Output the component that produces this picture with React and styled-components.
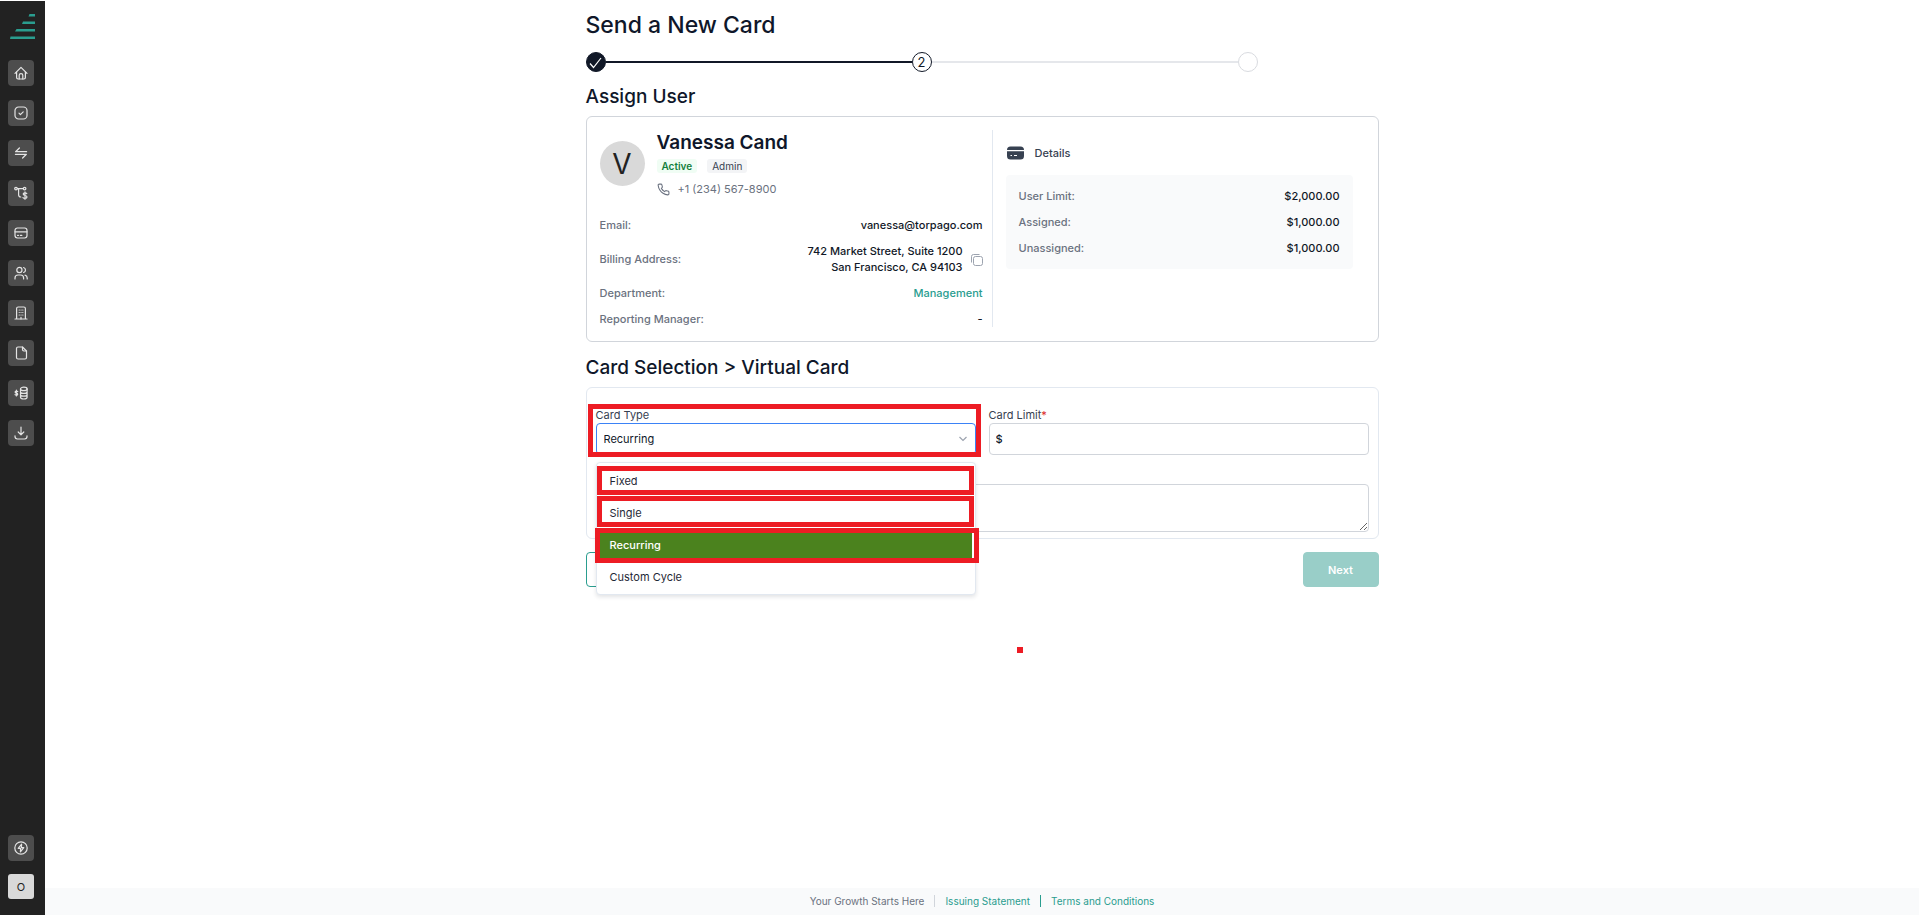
import React from 'react'
import styled, { createGlobalStyle, css } from 'styled-components'

const GlobalStyle = createGlobalStyle`
  *, *::before, *::after {
    box-sizing: border-box;
  }

  body {
    margin: 0;
    background: #fff;
    color: #0f172a;
    font-family: Inter, "Liberation Sans", sans-serif;
    font-size: 11px;
    line-height: 16px;
  }

  h1, h2, h3, p, ul, ol, dl, dd {
    margin: 0;
    padding: 0;
  }

  ul, ol {
    list-style: none;
  }

  a {
    color: #2a9d8f;
    text-decoration: none;
  }

  button, input, select, textarea {
    font: inherit;
    color: inherit;
  }
`

const Shell = styled.div`
  display: flex;
  min-height: 100vh;
`

const Sidebar = styled.nav`
  display: flex;
  flex-direction: column;
  align-items: center;
  flex: 0 0 45px;
  padding: 13px 3px 16px 0;
  border-top: 1px solid #fff;
  background: #222;
`

const Logo = styled.svg`
  display: block;
  width: 26px;
  height: 26px;
  margin: 0 0 20px 4px;
`

const NavList = styled.ul`
  display: flex;
  flex-direction: column;
  gap: 14px;
  flex: 1;
`

const NavLink = styled.a`
  display: flex;
  align-items: center;
  justify-content: center;
  width: 26px;
  height: 26px;
  border-radius: 4px;
  background: #4d4d4d;
  color: #e4e4e4;
`

const NavIcon = styled.svg`
  width: 14px;
  height: 14px;
  fill: none;
  stroke: currentColor;
  stroke-width: 1.2;
  stroke-linecap: round;
  stroke-linejoin: round;
`

const Account = styled.button`
  width: 26px;
  height: 25px;
  margin-top: 13px;
  padding: 0;
  border: 0;
  border-radius: 3px;
  background: #d9d9d9;
  color: #222;
`

const Page = styled.div`
  display: flex;
  flex-direction: column;
  flex: 1;
  min-width: 0;
`

const Content = styled.main`
  flex: 1;
  width: 100%;
  max-width: 793px;
  margin: 0 auto;
  padding-top: 9px;
`

const Title = styled.h1`
  font-size: 23px;
  font-weight: 500;
  line-height: 32px;
`

const Heading = styled.h2`
  font-size: 19px;
  font-weight: 500;
  line-height: 24px;
`

const Steps = styled.ol`
  display: flex;
  max-width: 672px;
  margin: 11px 0 13px;
`

const Step = styled.li`
  display: flex;
  align-items: center;
  flex: ${({ $last }) => ($last ? '0 0 auto' : '1')};

  &::after {
    content: ${({ $last }) => ($last ? 'none' : '""')};
    flex: 1;
    height: 2px;
    background: ${({ $done }) => ($done ? '#111827' : '#e5e7eb')};
  }
`

const stepColors = {
  done: css`
    background: #111827;
    border-color: #111827;
    color: #fff;
  `,
  current: css`
    border-color: #111827;
    color: #111827;
  `,
  next: css`
    border-color: #d9dbe0;
  `,
}

const StepDot = styled.span`
  display: flex;
  align-items: center;
  justify-content: center;
  width: 20px;
  height: 20px;
  border: 1px solid;
  border-radius: 50%;
  font-size: 13px;
  ${({ $state }) => stepColors[$state]}
`

const UserCard = styled.section`
  display: grid;
  grid-template-columns: 393px 1fr;
  gap: 13px;
  margin: 7px 0 14px;
  padding: 13px 25px 14px 13px;
  border: 1px solid #d1d5db;
  border-radius: 6px;
`

const Profile = styled.div`
  padding-right: 9px;
  border-right: 1px solid #e2e8f0;
`

const Person = styled.div`
  display: flex;
  align-items: center;
  gap: 12px;
  margin-bottom: 20px;
`

const Avatar = styled.span`
  display: flex;
  align-items: center;
  justify-content: center;
  width: 45px;
  height: 45px;
  border-radius: 50%;
  background: #d9d9d9;
  color: #222;
  font-size: 28px;
`

const Name = styled.h3`
  font-size: 19px;
  font-weight: 600;
  line-height: 26px;
`

const Tags = styled.div`
  display: flex;
  gap: 10px;
  margin: 3px 0 8px;
`

const Tag = styled.span`
  padding: 0 5px;
  border-radius: 3px;
  background: ${({ $active }) => ($active ? '#f0fdf4' : '#f3f4f6')};
  color: ${({ $active }) => ($active ? '#15803d' : '#374151')};
  font-size: 10px;
  font-weight: ${({ $active }) => ($active ? 600 : 400)};
  line-height: 14px;
`

const Phone = styled.p`
  display: flex;
  align-items: center;
  gap: 8px;
  color: #6b7280;
`

const SmallIcon = styled.svg`
  display: block;
  width: 13px;
  height: 13px;
  fill: none;
  stroke: currentColor;
`

const Facts = styled.dl`
  display: flex;
  flex-direction: column;
  gap: 10px;
`

const Fact = styled.div`
  display: flex;
  align-items: center;
  justify-content: space-between;
  font-weight: 500;

  dt {
    color: #6b7280;
  }

  dd {
    display: flex;
    align-items: center;
    gap: 7px;
    color: #111827;
    text-align: right;
  }
`

const CopyButton = styled.button`
  padding: 0;
  border: 0;
  background: none;
  color: #9ca3af;
`

const Details = styled.div`
  padding-top: 15px;
`

const DetailsTitle = styled.h3`
  display: flex;
  align-items: center;
  gap: 11px;
  margin: 0 0 14px 1px;
  color: #374151;
  font-size: 11px;
  font-weight: 500;
  line-height: 16px;
`

const CardGlyph = styled.svg`
  display: block;
  width: 17px;
  height: 14px;
`

const Limits = styled.div`
  padding: 13px;
  border-radius: 4px;
  background: #f9fafb;
`

const CardForm = styled.form`
  margin-top: 7px;
`

const Fields = styled.div`
  display: grid;
  grid-template-columns: 1fr 1fr;
  gap: 0 13px;
  padding: 19px 9px 6px;
  border: 1px solid #e2e8f0;
  border-radius: 6px;
`

const Field = styled.div`
  position: relative;
  display: flex;
  flex-direction: column;
`

const Label = styled.label`
  color: #374151;

  span {
    color: #dc2626;
  }
`

const controlStyle = css`
  width: 100%;
  border: 1px solid #d1d5db;
  border-radius: 4px;
  background: #fff;
  outline: none;
`

const SelectBox = styled.div`
  display: grid;
  align-items: center;

  > * {
    grid-area: 1 / 1;
  }
`

const Select = styled.select`
  ${controlStyle}
  height: 32px;
  padding: 0 7px;
  border-color: #3b82f6;
  appearance: none;
`

const Chevron = styled(SmallIcon)`
  justify-self: end;
  width: 8px;
  height: 6px;
  margin-right: 9px;
  color: #9ca3af;
  pointer-events: none;
`

const Input = styled.input`
  ${controlStyle}
  height: 32px;
  padding: 0 6px;
  font-weight: 500;
`

const Notes = styled.textarea`
  ${controlStyle}
  grid-column: 1 / -1;
  display: block;
  height: 48px;
  margin-top: 29px;
  resize: vertical;
`

const Menu = styled.ul`
  position: absolute;
  z-index: 2;
  top: 100%;
  left: 0;
  right: 0;
  margin-top: 7px;
  padding: 2px 3px 1px;
  border: 1px solid #e2e8f0;
  border-radius: 4px;
  background: #fff;
  box-shadow: 0 2px 4px rgba(15, 23, 42, 0.12);
`

const Option = styled.li`
  position: relative;
  padding: 8px 10px;
  border-radius: 2px;
  background: ${({ $selected }) => ($selected ? '#4b821e' : 'transparent')};
  color: ${({ $selected }) => ($selected ? '#fff' : '#1f2937')};
  font-weight: ${({ $selected }) => ($selected ? 500 : 400)};
`

/* Red outline laid over a control to point it out */
const Highlight = styled.span`
  position: absolute;
  z-index: 1;
  inset: ${({ $inset }) => $inset};
  border: 5px solid #ed1c24;
  pointer-events: none;
`

const Marker = styled.span`
  position: absolute;
  top: 95px;
  left: 431px;
  width: 6px;
  height: 6px;
  background: #ed1c24;
`

const Actions = styled.div`
  position: relative;
  display: flex;
  justify-content: space-between;
  margin-top: 13px;
`

const Button = styled.button`
  width: 76px;
  height: 35px;
  border: 1px solid ${({ $primary }) => ($primary ? '#99cec8' : '#2a9d8f')};
  border-radius: 4px;
  background: ${({ $primary }) => ($primary ? '#99cec8' : '#fff')};
  color: ${({ $primary }) => ($primary ? '#fff' : '#2a9d8f')};
  font-weight: 600;
`

const Footer = styled.footer`
  display: flex;
  align-items: center;
  justify-content: center;
  gap: 10px;
  padding: 5px 0 6px;
  background: #f9fafb;
  color: #6b7280;
  font-size: 10px;
`

const Rule = styled.span`
  width: 1px;
  height: 12px;
  background: ${({ $color }) => $color};
`

const navItems = [
  {
    label: 'Home',
    icon: (
      <>
        <path d="M1 7.4 7 1.4l6 6" />
        <path d="M2.6 6.2v5.4q0 1.4 1.4 1.4h6q1.4 0 1.4-1.4V6.2" />
        <path d="M5.2 13V9.2q0-1.6 1.8-1.6t1.8 1.6V13" />
      </>
    ),
  },
  {
    label: 'Approvals',
    icon: (
      <>
        <rect x="1" y="1" width="12" height="12" rx="3.6" />
        <path d="m5 7.2 1.4 1.4L9.2 5.8" />
      </>
    ),
  },
  {
    label: 'Transactions',
    icon: <path d="M12.6 5.7H1.6L5.4 2M1.4 8.3h11L8.6 12" />,
  },
  {
    label: 'Reimbursements',
    icon: (
      <>
        <circle cx="2" cy="2.6" r="1.3" />
        <circle cx="10.6" cy="2.6" r="1.3" />
        <path d="M3.3 2.6h6M4.6 2.8v6q0 2.2 2.2 2.2" />
        <path d="M12.8 7.6q-.6-.8-1.8-.8-1.8 0-1.8 1.3 0 1.1 1.8 1.4 2 .3 2 1.6 0 1.3-2 1.3-1.4 0-2-.8M11 5.9v7.4" />
      </>
    ),
  },
  {
    label: 'Cards',
    icon: (
      <>
        <rect x="1" y="2" width="12" height="10" rx="2.4" />
        <path d="M1 5.8h12M3.6 9.4h.8M6.4 9.4h1.4" />
      </>
    ),
  },
  {
    label: 'Users',
    icon: (
      <>
        <circle cx="5.4" cy="4" r="2.6" />
        <path d="M1 13v-1q0-3 3-3h2.6q3 0 3 3v1M9.6 1.5q1.900.6 1.900 2.500T9.6 6.5M11 9.2q2.200.6 2.200 2.800v1" />
      </>
    ),
  },
  {
    label: 'Company',
    icon: (
      <>
        <path d="M1 13h12M2.6 13V2.6Q2.6 1 4.2 1h5.6q1.6 0 1.6 1.6V13" />
        <path d="M5.2 4h.1M7 4h.1M8.8 4h.1M5.2 6.5h.1M7 6.5h.1M8.8 6.5h.1M5.2 9h.1M7 9h.1M8.8 9h.1M7 11.3V13" />
      </>
    ),
  },
  {
    label: 'Documents',
    icon: (
      <>
        <path d="M8.5 1H4Q2.5 1 2.5 2.5v9Q2.5 13 4 13h7q1.5 0 1.5-1.5V5z" />
        <path d="M8.5 1v2.6Q8.5 5 9.9 5h2.6" />
      </>
    ),
  },
  {
    label: 'Accounting',
    icon: (
      <>
        <ellipse cx="9.8" cy="2.9" rx="3.3" ry="1.7" />
        <path d="M6.5 2.9v8.4q0 1.7 3.3 1.7t3.3-1.7V2.9M6.5 5.7q0 1.7 3.3 1.7t3.3-1.7M6.5 8.5q0 1.7 3.3 1.7t3.3-1.7" />
        <path d="M3.7 5.5Q3.2 5 2.4 5 1.1 5 1.1 6t1.3 1.1Q3.7 7.3 3.7 8.2T2.4 9.2Q1.5 9.2 1 8.6M2.4 4.2v5.8" />
      </>
    ),
  },
  {
    label: 'Downloads',
    icon: <path d="M7 1v7.6M4.2 6 7 8.8 9.8 6M1 9.8v.8Q1 13 3.4 13h7.2q2.4 0 2.4-2.4v-.8" />,
  },
]

const options = [
  { label: 'Fixed', inset: '1px -2px 2px -3px' },
  { label: 'Single', inset: '-1px -2px 2px -3px' },
  { label: 'Recurring', inset: '-1px -7px -2px -5px', selected: true },
  { label: 'Custom Cycle' },
]

const limits = [
  ['User Limit:', '$2,000.00'],
  ['Assigned:', '$1,000.00'],
  ['Unassigned:', '$1,000.00'],
]

const SideNav = () => (
  <Sidebar aria-label="Main">
    <Logo viewBox="0 0 26 26" aria-hidden="true">
      <path
        fill="#2a9d8f"
        d="M19.5 0H25v2.400h-6.500zM13 7.500h12v2.400H12zM6.500 15H25v2.400H5zM.5 22.600H25V25H0z"
      />
    </Logo>
    <NavList>
      {navItems.map(({ label, icon }) => (
        <li key={label}>
          <NavLink href="#" aria-label={label}>
            <NavIcon viewBox="0 0 14 14">{icon}</NavIcon>
          </NavLink>
        </li>
      ))}
    </NavList>
    <NavLink href="#" aria-label="Quick actions">
      <NavIcon viewBox="0 0 14 14">
        <circle cx="7" cy="7" r="6.2" />
        <path d="M7.6 3.2 4.2 7.4h2.4l-.2 3.4 3.4-4.200H7.4z" />
      </NavIcon>
    </NavLink>
    <Account type="button">O</Account>
  </Sidebar>
)

const UserSummary = () => (
  <UserCard>
    <Profile>
      <Person>
        <Avatar>V</Avatar>
        <div>
          <Name>Vanessa Cand</Name>
          <Tags>
            <Tag $active>Active</Tag>
            <Tag>Admin</Tag>
          </Tags>
          <Phone>
            <SmallIcon viewBox="0 0 24 24" strokeWidth="2" strokeLinejoin="round">
              <path d="M22 16.92v3a2 2 0 0 1-2.18 2 19.79 19.79 0 0 1-8.63-3.07 19.5 19.5 0 0 1-6-6 19.79 19.79 0 0 1-3.07-8.67A2 2 0 0 1 4.11 2h3a2 2 0 0 1 2 1.72 12.84 12.84 0 0 0 .7 2.81 2 2 0 0 1-.45 2.11L8.09 9.91a16 16 0 0 0 6 6l1.27-1.27a2 2 0 0 1 2.11-.45 12.84 12.84 0 0 0 2.81.7A2 2 0 0 1 22 16.92z" />
            </SmallIcon>
            +1 (234) 567-8900
          </Phone>
        </div>
      </Person>
      <Facts>
        <Fact>
          <dt>Email:</dt>
          <dd>vanessa@torpago.com</dd>
        </Fact>
        <Fact>
          <dt>Billing Address:</dt>
          <dd>
            <span>
              742 Market Street, Suite 1200
              <br />
              San Francisco, CA 94103
            </span>
            <CopyButton type="button" aria-label="Copy address">
              <SmallIcon viewBox="0 0 13 13">
                <rect x="3.5" y="3.5" width="9" height="9" rx="2" />
                <path d="M1.5 9.500V3.500q0-2 2-2h6" />
              </SmallIcon>
            </CopyButton>
          </dd>
        </Fact>
        <Fact>
          <dt>Department:</dt>
          <dd>
            <a href="#">Management</a>
          </dd>
        </Fact>
        <Fact>
          <dt>Reporting Manager:</dt>
          <dd>-</dd>
        </Fact>
      </Facts>
    </Profile>
    <Details>
      <DetailsTitle>
        <CardGlyph viewBox="0 0 17 14" aria-hidden="true">
          <path fill="#374151" d="M0 4q0-3.5 3.5-3.5h10Q17 .5 17 4zM0 5.200h17V10q0 3.5-3.5 3.5h-10Q0 13.5 0 10z" />
          <path stroke="#fff" d="M3.5 9.5h1.5M7 9.5h3" />
        </CardGlyph>
        Details
      </DetailsTitle>
      <Limits>
        <Facts>
          {limits.map(([label, value]) => (
            <Fact key={label}>
              <dt>{label}</dt>
              <dd>{value}</dd>
            </Fact>
          ))}
        </Facts>
      </Limits>
    </Details>
  </UserCard>
)

const CardSelection = () => (
  <CardForm>
    <Fields>
      <Field>
        <Label htmlFor="card-type">Card Type</Label>
        <SelectBox>
          <Select id="card-type" defaultValue="Recurring">
            {options.map(({ label }) => (
              <option key={label}>{label}</option>
            ))}
          </Select>
          <Chevron viewBox="0 0 8 6" strokeWidth="1.2">
            <path d="m.5 1 3.5 3.5L7.5 1" />
          </Chevron>
        </SelectBox>
        <Highlight $inset="-3px -5px -2px -8px" />
        <Menu role="listbox" aria-label="Card Type">
          {options.map(({ label, inset, selected }) => (
            <Option key={label} role="option" aria-selected={!!selected} $selected={selected}>
              {label}
              {inset && <Highlight $inset={inset} />}
            </Option>
          ))}
        </Menu>
      </Field>
      <Field>
        <Label htmlFor="card-limit">
          Card Limit<span>*</span>
        </Label>
        <Input id="card-limit" defaultValue="$" />
      </Field>
      <Notes aria-label="Notes" />
    </Fields>
    <Actions>
      <Button type="button" aria-label="Back" />
      <Button type="submit" $primary disabled>
        Next
      </Button>
      <Marker />
    </Actions>
  </CardForm>
)

const App = () => (
  <>
    <GlobalStyle />
    <Shell>
      <SideNav />
      <Page>
        <Content>
          <Title>Send a New Card</Title>
          <Steps>
            <Step $done>
              <StepDot $state="done">
                <SmallIcon viewBox="0 0 13 13" strokeWidth="1.2">
                  <path d="m1 7.5 3.5 4L12 2" />
                </SmallIcon>
              </StepDot>
            </Step>
            <Step>
              <StepDot $state="current">2</StepDot>
            </Step>
            <Step $last>
              <StepDot $state="next" />
            </Step>
          </Steps>
          <Heading>Assign User</Heading>
          <UserSummary />
          <Heading>Card Selection &gt; Virtual Card</Heading>
          <CardSelection />
        </Content>
        <Footer>
          <span>Your Growth Starts Here</span>
          <Rule $color="#d1d5db" />
          <a href="#">Issuing Statement</a>
          <Rule $color="#2a9d8f" />
          <a href="#">Terms and Conditions</a>
        </Footer>
      </Page>
    </Shell>
  </>
)

export default App
